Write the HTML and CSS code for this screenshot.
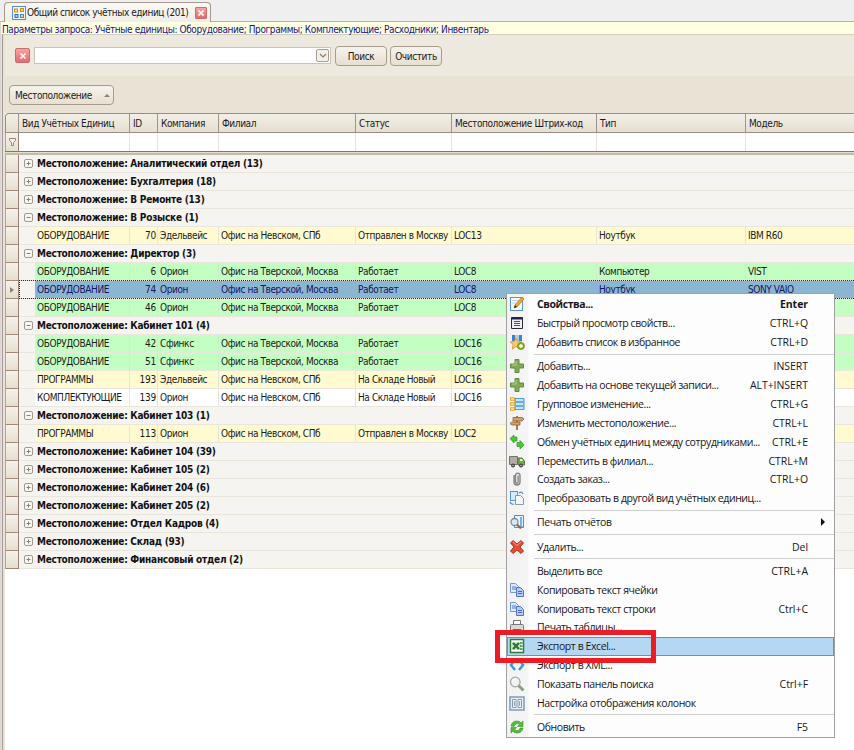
FILE: index.html
```html
<!DOCTYPE html>
<html lang="ru">
<head>
<meta charset="utf-8">
<title>Общий список учётных единиц</title>
<link rel="stylesheet" href="styles.css">
</head>
<body>
<div class="tabs">
  <div class="tab">
    <svg class="tab-icon" viewBox="0 0 14 14"><rect x=".5" y=".5" width="13" height="13" fill="#eef5fc" stroke="#5b8fc4"/><rect x="2.5" y="3" width="3" height="3" fill="#ffe08a" stroke="#d68a1c"/><rect x="8.5" y="2.5" width="3" height="3" fill="#ffd060" stroke="#d68a1c"/><rect x="3" y="8.5" width="3" height="3" fill="#9cd0f4" stroke="#2f78b8"/><rect x="8.5" y="8.5" width="3" height="3" fill="#ffd060" stroke="#4a88b8"/></svg>
    <span>Общий список учётных единиц (201)</span>
    <i class="close"><svg viewBox="0 0 8 8"><path d="M1.5 1.5l5 5m0-5l-5 5"/></svg></i>
  </div>
</div>
<div class="window">
  <div class="params">Параметры запроса: Учётные единицы: Оборудование; Программы; Комплектующие; Расходники; Инвентарь</div>
  <div class="panel">
    <div class="search">
      <i class="close close-lg"><svg viewBox="0 0 8 8"><path d="M1.5 1.5l5 5m0-5l-5 5"/></svg></i>
      <div class="combo"><i class="drop"><svg viewBox="0 0 8 6"><path d="M1 1l3 3 3-3"/></svg></i></div>
      <div class="btn find">Поиск</div>
      <div class="btn clear">Очистить</div>
    </div>
    <div class="groupbar"><div class="btn groupby"><span>Местоположение</span><i></i></div></div>
    <div class="grid">
      <div class="head"><b></b><span>Вид Учётных Единиц</span><span>ID</span><span>Компания</span><span>Филиал</span><span>Статус</span><span>Местоположение Штрих-код</span><span>Тип</span><span>Модель</span></div>
      <div class="filter"><b><svg viewBox="0 0 7 8"><path d="M.5.5h6v2l-2 2v3h-2v-3l-2-2z"/></svg></b><span></span><span></span><span></span><span></span><span></span><span></span><span></span><span></span></div>
      <div class="rule"></div>
      <div id="rows"></div>
    </div>
  </div>
</div>
<div class="menu" id="menu"></div>
<div class="marker"></div>
<script src="app.js"></script>
</body>
</html>
```
FILE: styles.css
```css
* { box-sizing: border-box; }
body {
  margin: 0; width: 854px; height: 750px; overflow: hidden; position: relative;
  background: #efefef; color: #1c1a1c;
  font: 10px/14px "DejaVu Sans Condensed", "DejaVu Sans", sans-serif;
  font-stretch: condensed; white-space: nowrap; letter-spacing: -.4px;
}
i { font-style: normal; }
svg { display: block; }
.tabs { height: 21px; padding: 2px 0 0 4px; }
.tab {
  width: 207px; height: 20px; display: flex; align-items: center; padding: 0 3px 0 7px;
  border: 1px solid #a8998f; border-bottom: 0; border-radius: 4px 4px 0 0; background: linear-gradient(#f9f8f5, #f1eee8);
  position: relative;
}
.tab-icon { width: 14px; height: 14px; margin-right: 1px; flex: none; }
.tab span { width: 162px; margin-right: 7px; letter-spacing: -.45px; }
.close {
  width: 12px; height: 12px; flex: none; display: grid; place-items: center;
  border: 1px solid #c46e70; border-radius: 1px; background: linear-gradient(#f7a3a3, #e56b6d);
}
.close svg { width: 8px; height: 8px; fill: none; stroke: #fff; stroke-width: 1.7; }
.window { height: 729px; border-top: 1px solid #b8aeaa; border-left: 1px solid #dad6d4; background: #e4dfd9; }
.params { height: 12px; line-height: 15px; padding-left: 1px; background: #ffffe1; color: #15158a; }
.panel { height: 716px; margin-left: 1px; padding-left: 2px; border-left: 1px solid #a79a96; border-top: 1px solid #d3cdbd; background: #e8e3d5; }
.search { height: 41px; display: flex; align-items: center; padding-left: 10px; background: #ede9df; }
.close-lg { width: 15px; height: 15px; border-radius: 2px; }
.combo { width: 297px; height: 17px; margin-left: 4px; padding: 1px; display: flex; justify-content: flex-end; background: #fff; border: 1px solid #cbc3ba; }
.drop { width: 13px; height: 13px; display: grid; place-items: center; border: 1px solid #a99b91; border-radius: 2px; background: #f3f0e8; }
.drop svg { width: 8px; height: 6px; fill: none; stroke: #877870; stroke-width: 1.2; }
.btn { height: 20px; border: 1px solid #a99b8e; border-radius: 4px; background: linear-gradient(#f5f3ee, #e6e0d0); text-align: center; line-height: 19px; }
.find { width: 52px; margin-left: 4px; }
.clear { width: 52px; margin-left: 3px; }
.groupbar { height: 37px; padding: 9px 0 0 4px; }
.groupby { width: 105px; display: flex; align-items: center; justify-content: space-between; padding: 0 3px 0 5px; }
.groupby i { border: 3px solid transparent; border-top: 0; border-bottom: 3px solid #8d7f73; }
.grid { height: 638px; background: #fff; }
.head, .filter, .row { display: grid; grid-template-columns: 14px 111px 28px 61px 137px 96px 145px 149px 109px; }
.head { height: 20px; border-top: 1px solid #9c8c80; border-bottom: 1px solid #9c8c80; border-left: 1px solid #9c8c80; grid-template-columns: 13px 111px 28px 61px 137px 96px 145px 149px 109px; border-radius: 4px 0 0 0; background: linear-gradient(#f2efe8, #e5dfcf); line-height: 20px; }
.head span, .head b { border-right: 1px solid #a3948a; padding-left: 3px; }
.filter { height: 18px; }
.filter span { border-right: 1px solid #e6e2d9; }
.filter b, .row > b { display: grid; place-items: center; border-right: 1px solid #9c8275; border-left: 1px solid #b5a598; background: linear-gradient(#f4f2ed, #e5dfcf); }
.filter svg { width: 7px; height: 8px; fill: #f5f2ea; stroke: #94877d; }
.rule { height: 4px; border-top: 1px solid #877668; border-bottom: 2px solid #c3baab; background: #e6dfce; }
.row { height: 18px; background: #f6f4f1; border-bottom: 1px solid #eae6dc; position: relative; }
.row > b { height: 18px; position: relative; z-index: 1; border-bottom: 1px solid #a2887b; }
.group { grid-template-columns: 14px 18px 1fr; font-weight: bold; line-height: 18px; letter-spacing: -.25px; color: #111; }
.group .box { width: 9px; height: 9px; margin: 4px 0 0 5px; border: 1px solid #a5978e; border-radius: 2px; background: #f8f6f1; }
.box svg { width: 7px; height: 7px; fill: none; stroke: #8e8077; }
.data { grid-template-columns: 14px 16px 95px 28px 61px 137px 96px 145px 149px 109px; line-height: 18px; }
.data span { height: 17px; padding-left: 2px; border-right: 1px solid #e9e4db; }
.data span:nth-of-type(2) { text-align: right; padding-right: 1px; letter-spacing: -.2px; }
.yellow span { background: #fffacf; }
.green span { background: #c3ffc3; border-right-color: #c9efc4; }
.white span { background: #fff; }
.selected span { background: #8bb6d1; border-right-color: #91b2d2; color: #141464; }
.selected::after { content: ""; position: absolute; left: 14px; right: 0; top: -1px; bottom: -1px; border: 1px dotted #1b2455; border-right: 0; }
.selected > b::before { content: ""; border: 3px solid transparent; border-left: 4px solid #8d7f73; border-right: 0; }
.menu {
  position: absolute; left: 506px; top: 293px; width: 329px; height: 445px; padding-top: 1px;
  border: 1px solid #a0a0a0; background: linear-gradient(90deg, #f2f2f2 0, #f5f5f5 21px, #fdfdfd 22px);
  color: #17171b; font: 10.5px/18px "Open Sans", "Noto Sans", sans-serif; letter-spacing: -.42px;
}
.item { height: 18.87px; display: grid; grid-template-columns: 29px 1fr auto; align-items: center; padding: 0 26px 0 1px; }
.item svg { width: 16px; height: 16px; margin-left: 1px; }
.item.bold { font-weight: bold; }
.item.hot { background: #b5d7f3; box-shadow: inset 0 0 0 1px #4b9bdc; }
.item em { font-style: normal; letter-spacing: -.05px; }
.item em.arrow { transform: translateX(17px); border: 4px solid transparent; border-left: 4px solid #111; border-right: 0; }
.sep { height: 5.3px; margin-left: 27px; padding-top: 2px; }
.sep::before { content: ""; display: block; height: 1px; background: #cecece; }
.marker { position: absolute; left: 495px; top: 630px; width: 161px; height: 33px; border: 5px solid #ed1c24; }
```
FILE: app.js
```js
const G = "group";
const orion = "Офис на Тверской, Москва", spb = "Офис на Невском, СПб";
const hw = "ОБОРУДОВАНИЕ", sw = "ПРОГРАММЫ";
const rows = [
  [G, "+", "Аналитический отдел (13)"], [G, "+", "Бухгалтерия (18)"], [G, "+", "В Ремонте (13)"], [G, "-", "В Розыске (1)"],
  ["yellow", hw, 70, "Эдельвейс", spb, "Отправлен в Москву", "LOC13", "Ноутбук", "IBM R60"],
  [G, "-", "Директор (3)"],
  ["green", hw, 6, "Орион", orion, "Работает", "LOC8", "Компьютер", "VIST"],
  ["selected", hw, 74, "Орион", orion, "Работает", "LOC8", "Ноутбук", "SONY VAIO"],
  ["green", hw, 46, "Орион", orion, "Работает", "LOC8", "", ""],
  [G, "-", "Кабинет 101 (4)"],
  ["green", hw, 42, "Сфинкс", orion, "Работает", "LOC16", "", ""],
  ["green", hw, 51, "Сфинкс", orion, "Работает", "LOC16", "", ""],
  ["yellow", sw, 193, "Эдельвейс", spb, "На Складе Новый", "LOC16", "", ""],
  ["white", "КОМПЛЕКТУЮЩИЕ", 139, "Орион", spb, "На Складе Новый", "LOC16", "", ""],
  [G, "-", "Кабинет 103 (1)"],
  ["yellow", sw, 113, "Орион", spb, "Отправлен в Москву", "LOC2", "", ""],
  [G, "+", "Кабинет 104 (39)"], [G, "+", "Кабинет 105 (2)"], [G, "+", "Кабинет 204 (6)"], [G, "+", "Кабинет 205 (2)"],
  [G, "+", "Отдел Кадров (4)"], [G, "+", "Склад (93)"], [G, "+", "Финансовый отдел (2)"]
];
document.getElementById("rows").innerHTML = rows.map(([kind, ...c]) => kind === G
  ? `<div class="row group"><b></b><i class="box"><svg viewBox="0 0 7 7"><path d="M1.5 3.5h4${c[0] === "+" ? "M3.5 1.5v4" : ""}"/></svg></i><div>Местоположение: ${c[1]}</div></div>`
  : `<div class="row data ${kind}"><b></b><i></i>${c.map(t => `<span>${t}</span>`).join("")}</div>`).join("");

const page = (x, y, w, h, f = "#e9f3ff") => `<rect x="${x}" y="${y}" width="${w}" height="${h}" fill="${f}" stroke="#5c91cf"/>`;
const copy = `<path d="M1.500 1.500h5l3 3v6h-8z" fill="#dceaff" stroke="#7398d5"/><path d="M3 5h4M3 7h4" stroke="#5279c8"/><path d="M7.500 5.500h4l3 3v6h-7z" fill="#b3cbf6" stroke="#5374c3"/><path d="M9 9.500h4M9 11.500h4" stroke="#4568bd"/>`;
const plus = `<path d="M6 1.500h4v4.500h4.500v4h-4.500v4.500h-4v-4.500h-4.500v-4h4.500z" fill="#83aa58" stroke="#5e8b3c"/><path d="M7 3v4h-4" fill="none" stroke="#b4cd94"/>`;
const icons = {
  edit: page(1.500, 1.500, 12, 13, "#f7fbff") + `<path d="M3 4.500h6M3 7h4" stroke="#b8cfe8"/><path d="M5 12l1-3 7-8 2 2-7 8z" fill="#f5a52c" stroke="#a36b2a" stroke-width=".7"/><path d="M5 12l1-3 2 2z" fill="#333"/>`,
  view: `<path d="M2.500 2.500h11v11h-11z" fill="#eee" stroke="#28283f"/><path d="M2.500 3.500h11" stroke="#20204c" stroke-width="2"/><path d="M5 6.500h6M5 8.500h6M5 10.500h6" stroke="#555"/>`,
  star: `<path d="M3 1h10v6H3z" fill="#3c82c8"/><path d="M6 1h4v6H6z" fill="#a9cdec"/><path d="M7 4l1.800 3.500 4 .4-3 2.700.9 4L7 12.500 3.300 15l.8-4.400-3-2.700 4-.4z" fill="#ffc66d" stroke="#c88231" stroke-width=".7"/><circle cx="12" cy="12" r="3.500" fill="#7cb816" stroke="#568a10" stroke-width=".6"/><path d="M12 10v4M10 12h4" stroke="#fff" stroke-width="1.400"/>`,
  plus,
  group: `<path d="M6 2.500h9v11H6z" fill="#8ec4f5" stroke="#4c9ae4"/><path d="M7 4h7M7 8h7M7 12h7" stroke="#e2f1ff" stroke-width="1.300"/><path d="M7 6h7M7 10h7" stroke="#4090de"/><path d="M1 3h5M1 8h5M1 13h5" stroke="#e9a52b" stroke-width="3.500"/><path d="M2 3h3M2 8h3M2 13h3" stroke="#ffe590" stroke-width="1.500"/>`,
  sign: `<path d="M7 1h2v14H7z" fill="#a97b51"/><path d="M4 2.500h9l2 1.500-2 2H4zM11 7H3L1 8.500 3 10h8z" fill="#d4a06b" stroke="#8c6038" stroke-width=".8"/>`,
  swap: `<path d="M1 4.500l4-3.500v2h3v4H5v2zM15 11l-4 4v-2.500H8v-4h3V6.500z" fill="#46cd31" stroke="#2d9622" stroke-width=".7"/>`,
  truck: `<path d="M.5 3.500h8v8h-8z" fill="#b4aaa1" stroke="#7a7069"/><path d="M9 5h4l2.500 3v4H9z" fill="#77a84b" stroke="#577d38"/><path d="M11 6h2l1 2h-3z" fill="#e8f3e2"/><circle cx="4" cy="12.500" r="2" fill="#444"/><circle cx="12" cy="12.500" r="2" fill="#444"/><circle cx="4" cy="12.500" r=".7" fill="#ddd"/><circle cx="12" cy="12.500" r=".7" fill="#ddd"/>`,
  clip: `<path d="M5 4v7a3 3 0 006 0V4a2.300 2.300 0 00-4.500 0v7a1.300 1.300 0 002.600 0V4.500" fill="none" stroke="#858585" stroke-width="1.400"/>`,
  convert: page(1.500, 1.500, 7, 9, "#cdefff") + `<path d="M6.500 5.500h5l3 3v6h-8z" fill="#f3f6f8" stroke="#8999a6"/><path d="M10 3q3-2 4 1M1 12q1 3 4 2" fill="none" stroke="#478ad0" stroke-width="1.200"/>`,
  report: `<path d="M5.500 1.500h9v12h-9z" fill="#e9f5ff" stroke="#4b8dce"/><path d="M12 3v9M10 13h4" stroke="#4e9be0" stroke-width="1.500"/><circle cx="5.500" cy="8" r="3.500" fill="#dce8ef" stroke="#7f8d98" stroke-width="1.300"/><path d="M8 10.500l4 4" stroke="#9b6544" stroke-width="2.200"/>`,
  del: `<path d="M4 1.500l4 3.500 4-3.500 2.500 2.500L11 8l3.500 4-2.500 2.500L8 11l-4 3.500L1.500 12 5 8 1.500 4z" fill="#e44e30" stroke="#b83220"/><path d="M4 3l4 3.500 4-3.500" fill="none" stroke="#f59a80"/>`,
  copy,
  print: `<path d="M4.500 1.500h7v5h-7z" fill="#fff" stroke="#777"/><path d="M1.500 6.500q0-1 1-1h11q1 0 1 1v6h-13z" fill="#d9d9d9" stroke="#777"/><path d="M4 10.500h8v4H4z" fill="#fff" stroke="#666"/>`,
  excel: `<path d="M1.500 1.500h13v13h-13z" fill="#fff" stroke="#2c7b37" stroke-width="1.500"/><path d="M3 4h9v8H3z" fill="#cde5c8"/><path d="M4 5l6 6M10 5l-6 6" stroke="#277336" stroke-width="2.300"/><path d="M11 5h2.500M11 8h2.500M11 11h2.500" stroke="#3b8b40" stroke-width="1.500"/>`,
  xml: `<path d="M6 3L2 8l4 5M10 3l4 5-4 5" fill="none" stroke="#3c99d9" stroke-width="2.500"/>`,
  find: `<path d="M9.500 9.500l5 5" stroke="#8d9e77" stroke-width="3"/><circle cx="6.300" cy="6" r="4.800" fill="#f0f2f2" stroke="#a3a7a7" stroke-width="1.300"/><path d="M3.500 6a3 3 0 013-3" stroke="#fff" fill="none"/>`,
  columns: `<rect x="1" y="2" width="14" height="13" fill="#e6edf5" stroke="#7d9cc0" stroke-width="1.500"/><path d="M3.500 4.500h3.500v8h-3.500zM9 4.500h3.500v8h-3.500z" fill="#fff" stroke="#8199b5"/><path d="M5.300 6v5M10.700 6v5" stroke="#8094aa"/>`,
  refresh: `<path d="M2 7q1-5 6-5 3 0 4 2l2-2v5.500H8.500l2-2Q9 4 7 5 5 6 5 7.500zM14 9q-1 5-6 5-3 0-4-2l-2 2V8.500h5.500l-2 2Q7 12 9 11.500 11 11 11 9z" fill="#54bd35" stroke="#319122" stroke-width=".6"/>`
};
const items = [
  ["edit", "Свойства...", "Enter", "bold"], ["view", "Быстрый просмотр свойств...", "CTRL+Q"], ["star", "Добавить список в избранное", "CTRL+D"], 0,
  ["plus", "Добавить...", "INSERT"], ["plus", "Добавить на основе текущей записи...", "ALT+INSERT"], ["group", "Групповое изменение...", "CTRL+G"],
  ["sign", "Изменить местоположение...", "CTRL+L"], ["swap", "Обмен учётных единиц между сотрудниками...", "CTRL+E"],
  ["truck", "Переместить в филиал...", "CTRL+M"], ["clip", "Создать заказ...", "CTRL+O"], ["convert", "Преобразовать в другой вид учётных единиц...", ""], 0,
  ["report", "Печать отчётов", ">"], 0, ["del", "Удалить...", "Del"], 0,
  ["", "Выделить все", "CTRL+A"], ["copy", "Копировать текст ячейки", ""], ["copy", "Копировать текст строки", "Ctrl+C"],
  ["print", "Печать таблицы...", ""], ["excel", "Экспорт в Excel...", "", "hot"], ["xml", "Экспорт в XML...", ""],
  ["find", "Показать панель поиска", "Ctrl+F"], ["columns", "Настройка отображения колонок", ""], 0, ["refresh", "Обновить", "F5"]
];
document.getElementById("menu").innerHTML = items.map(it => it
  ? `<div class="item ${it[3] || ""}"><svg viewBox="0 0 16 16">${icons[it[0]] || ""}</svg><span>${it[1]}</span>${it[2] === ">" ? '<em class="arrow"></em>' : `<em>${it[2]}</em>`}</div>`
  : '<div class="sep"></div>').join("");
```
